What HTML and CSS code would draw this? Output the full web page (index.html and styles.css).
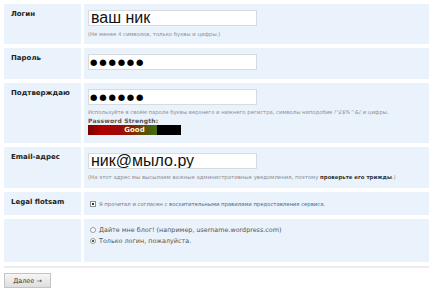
FILE: index.html
```html
<!DOCTYPE html>
<html lang="ru">
<head>
<meta charset="utf-8">
<link rel="stylesheet" href="styles.css">
</head>
<body>
<form class="signup">
  <div class="rows">
    <div class="row r-login">
      <div class="label">Логин</div>
      <div class="field">
        <input class="box" type="text" value="ваш ник">
        <div class="hint">(Не менее 4 символов, только буквы и цифры.)</div>
      </div>
    </div>
    <div class="row r-pass">
      <div class="label">Пароль</div>
      <div class="field">
        <div class="box dots">●●●●●●</div>
      </div>
    </div>
    <div class="row r-confirm">
      <div class="label">Подтверждаю</div>
      <div class="field">
        <div class="box dots">●●●●●●</div>
        <div class="hint hint-pw">Используйте в своём пароле буквы верхнего и нижнего регистра, символы наподобие <i>!"£$%^&amp;(</i> и цифры.</div>
        <div class="strength-label">Password Strength:</div>
        <div class="strength"><div class="fill"></div><span class="word">Good</span></div>
      </div>
    </div>
    <div class="row r-email">
      <div class="label">Email-адрес</div>
      <div class="field">
        <input class="box" type="text" value="ник@мыло.ру">
        <div class="hint hint-mail">(На этот адрес мы высылаем важные административные уведомления, поэтому <b>проверьте его трижды</b>.)</div>
      </div>
    </div>
    <div class="row r-legal">
      <div class="label">Legal flotsam</div>
      <div class="field legal">
        <span class="check"></span>
        <span class="legal-text">Я прочитал и согласен с <a href="#">восхитительными правилами предоставления сервиса</a>.</span>
      </div>
    </div>
    <div class="row r-blog">
      <div class="label"></div>
      <div class="field options">
        <label class="opt"><span class="radio"></span>Дайте мне блог! (например, username.wordpress.com)</label>
        <label class="opt"><span class="radio on"></span>Только логин, пожалуйста.</label>
      </div>
    </div>
  </div>
  <div class="sep"></div>
  <div class="actions"><button type="button" class="next">Далее →</button></div>
</form>
</body>
</html>
```
FILE: styles.css
```css
html, body { margin: 0; padding: 0; background: #fff; }
body { font-family: "DejaVu Sans", Verdana, sans-serif; color: #333; }
.signup { padding: 4px 5px 0 4px; width: 425px; }
.rows { display: flex; flex-direction: column; gap: 4px; }
.row { display: grid; grid-template-columns: 77px 345px; column-gap: 3px; }
.row > div { background: #eaf2fb; }
.r-login { height: 40px; }
.r-pass { height: 31px; }
.r-confirm { height: 60px; }
.r-email { height: 41px; }
.r-legal { height: 23px; }
.r-blog { height: 43px; }
.label { font-weight: bold; font-size: 7px; color: #222; padding: 6px 0 0 7px; box-sizing: border-box; }
.field { padding: 6px 0 0 4px; box-sizing: border-box; }
.box { display: block; box-sizing: border-box; width: 169px; height: 16px; margin: 0; border: 1px solid #d6dbe0; background: #fff; font-family: "Liberation Sans", Arial, sans-serif; font-size: 16px; color: #111; padding: 0 2px; line-height: 14px; outline: none; }
.dots { font-family: "DejaVu Sans", sans-serif; font-size: 8.5px; letter-spacing: 1.8px; line-height: 14px; padding-left: 1px; color: #000; }
.hint { font-size: 5.3px; color: #8a8f95; margin-top: 5px; white-space: nowrap; }
.hint-pw { margin-top: 4px; }
.hint-mail { font-size: 5.4px; }
.hint-mail b { color: #333; }
.strength-label { font-weight: bold; font-size: 6px; color: #555; margin-top: 2px; letter-spacing: 0.2px; line-height: 7px; }
.strength { position: relative; width: 93px; height: 10px; background: #000; margin-top: 1px; display: flex; align-items: center; justify-content: center; }
.strength .fill { position: absolute; left: 0; top: 0; bottom: 0; width: 69px; background: linear-gradient(to right, #7a0000 0%, #b00000 20%, #a00808 45%, #8a2000 62%, #5e4a08 80%, #3f7012 100%); }
.strength .word { position: relative; font-weight: bold; font-size: 7px; color: #fff8d0; }
.legal { display: flex; align-items: center; padding-top: 0; padding-left: 6px; gap: 3px; }
.check { width: 6px; height: 6px; border: 1px solid #8a8f95; background: #fff; box-sizing: border-box; position: relative; }
.check::after { content: ""; position: absolute; left: 1px; top: 1px; width: 2px; height: 2px; background: #333; }
.legal-text { font-size: 5.3px; color: #777; }
.legal-text a { color: #3a6a9a; text-decoration: none; }
.options { padding: 7px 0 0 6px; display: flex; flex-direction: column; gap: 3px; }
.opt { display: flex; align-items: center; gap: 3px; font-size: 6.4px; color: #555; line-height: 8px; }
.radio { width: 6px; height: 6px; border-radius: 50%; border: 1px solid #999; background: #fff; box-sizing: border-box; display: inline-flex; align-items: center; justify-content: center; }
.radio.on::after { content: ""; width: 2px; height: 2px; border-radius: 50%; background: #222; }
.sep { height: 2px; background: #ececec; margin-top: 4px; width: 425px; }
.actions { padding-top: 5px; display: flex; }
.next { width: 47px; height: 15px; padding: 0; font-family: "DejaVu Sans", sans-serif; font-size: 6.5px; color: #333; border: 1px solid #c4c4c4; background: linear-gradient(#f6f6f6, #dedede); }
```
